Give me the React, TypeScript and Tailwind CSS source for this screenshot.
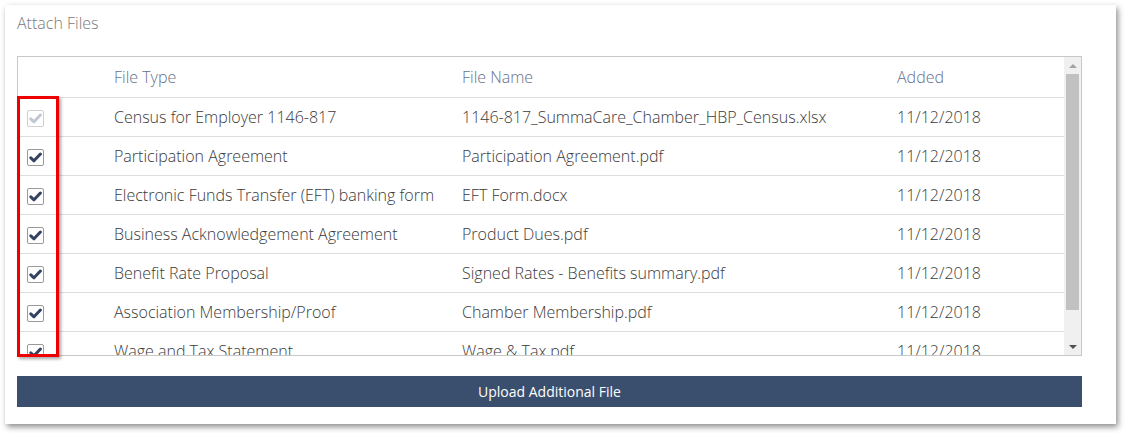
import React from "react";

const rows = [
  { type: "Census for Employer 1146-817", name: "1146-817_SummaCare_Chamber_HBP_Census.xlsx", disabled: true },
  { type: "Participation Agreement", name: "Participation Agreement.pdf" },
  { type: "Electronic Funds Transfer (EFT) banking form", name: "EFT Form.docx" },
  { type: "Business Acknowledgement Agreement", name: "Product Dues.pdf" },
  { type: "Benefit Rate Proposal", name: "Signed Rates - Benefits summary.pdf" },
  { type: "Association Membership/Proof", name: "Chamber Membership.pdf" },
  { type: "Wage and Tax Statement", name: "Wage & Tax.pdf" },
  { type: "Employee Roster", name: "Roster.pdf" },
];

function Check({ disabled }: { disabled?: boolean }) {
  return (
    <div
      className={`flex h-[17px] w-[17px] items-center justify-center rounded-[2px] border bg-white ${
        disabled ? "border-[#d0d0d0]" : "border-[#9a9a9a]"
      }`}
    >
      <svg width="13" height="11" viewBox="0 0 13 11">
        <path
          d="M1.8 5.8 L5 8.8 L11.4 2"
          fill="none"
          stroke={disabled ? "#c2c8d2" : "#34435f"}
          strokeWidth="3"
          strokeLinecap="round"
          strokeLinejoin="round"
        />
      </svg>
    </div>
  );
}

export default function App() {
  return (
    <div
      className="h-[433px] w-[1125px] bg-white pl-[5px] pt-[5px]"
      style={{ fontFamily: '"Open Sans", "Noto Sans", sans-serif' }}
    >
      <div className="flex h-[419px] w-[1111px] flex-col bg-white pl-[12px] pr-[34px] pt-[7px] shadow-[2px_3px_6px_rgba(0,0,0,0.45)]">
        <div className="h-[22px] text-[16px] font-light leading-[22px] text-[#7a7a7a]">Attach Files</div>
        <div className="relative mt-[22px] flex h-[300px] w-[1065px] border border-[#c8c8c8]">
          <div className="h-full w-[1046px] overflow-hidden">
            <div className="flex h-[41px] border-b border-[#dddddd] text-[16px] font-light leading-[22px] text-[#66718c]">
              <div className="w-[82px]" />
              <div className="flex w-[348px] items-center pl-[14px]">File Type</div>
              <div className="flex w-[435px] items-center pl-[14px]">File Name</div>
              <div className="flex w-[181px] items-center pl-[14px]">Added</div>
            </div>
            {rows.map((r, i) => (
              <div
                key={i}
                className="flex h-[39px] border-b border-[#dddddd] text-[16px] font-light leading-[22px] text-[#3a3a3a]"
              >
                <div className="flex w-[82px] items-center pl-[9px] pt-[2px]">
                  <Check disabled={r.disabled} />
                </div>
                <div className="flex w-[348px] items-center whitespace-nowrap pl-[14px]">{r.type}</div>
                <div className="flex w-[435px] items-center whitespace-nowrap pl-[14px]">{r.name}</div>
                <div className="flex w-[181px] items-center pl-[14px]">11/12/2018</div>
              </div>
            ))}
          </div>
          <div className="flex h-full w-[17px] flex-col items-center bg-[#f0f0f0]">
            <div className="flex h-[17px] w-full items-center justify-center">
              <div className="h-0 w-0 border-x-[4px] border-b-[4px] border-x-transparent border-b-[#a3a3a3]" />
            </div>
            <div className="h-[236px] w-[13px] bg-[#c1c1c1]" />
            <div className="flex-1" />
            <div className="flex h-[17px] w-full items-center justify-center">
              <div className="h-0 w-0 border-x-[4px] border-t-[4px] border-x-transparent border-t-[#505050]" />
            </div>
          </div>
          <div className="absolute left-[-1px] top-[39px] h-[261px] w-[42px] border-[3px] border-[#ee0000] shadow-[2px_2px_3px_rgba(0,0,0,0.35)]" />
        </div>
        <button className="mt-[20px] h-[31px] w-[1065px] bg-[#3a4f6e] text-[14px] font-medium text-white">
          Upload Additional File
        </button>
      </div>
    </div>
  );
}
